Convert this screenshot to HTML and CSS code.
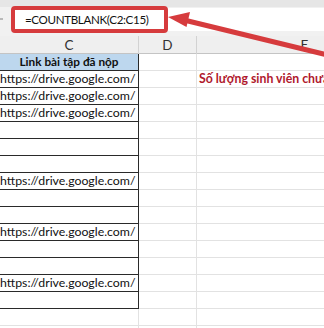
FILE: index.html
```html
<!DOCTYPE html>
<html lang="vi">
<head>
<meta charset="utf-8">
<link rel="stylesheet" href="styles.css">
</head>
<body>
<div class="app">
  <div class="topbar"></div>
  <div class="formula-row">
    <span class="fx-tail"></span>
    <div class="formula-input">=COUNTBLANK(C2:C15)</div>
  </div>
  <div class="col-headers">
    <div class="ch">C</div>
    <div class="ch">D</div>
    <div class="ch">E</div>
  </div>
  <div class="grid">
    <div class="cell c head">Link bài tập đã nộp</div><div class="cell"></div><div class="cell e"></div>
    <div class="cell c">https://drive.google.com/</div><div class="cell"></div><div class="cell e"><span class="note">Số lượng sinh viên chưa nộp bài</span></div>
    <div class="cell c">https://drive.google.com/</div><div class="cell"></div><div class="cell e"></div>
    <div class="cell c">https://drive.google.com/</div><div class="cell"></div><div class="cell e"></div>
    <div class="cell c"></div><div class="cell"></div><div class="cell e"></div>
    <div class="cell c"></div><div class="cell"></div><div class="cell e"></div>
    <div class="cell c"></div><div class="cell"></div><div class="cell e"></div>
    <div class="cell c">https://drive.google.com/</div><div class="cell"></div><div class="cell e"></div>
    <div class="cell c"></div><div class="cell"></div><div class="cell e"></div>
    <div class="cell c"></div><div class="cell"></div><div class="cell e"></div>
    <div class="cell c">https://drive.google.com/</div><div class="cell"></div><div class="cell e"></div>
    <div class="cell c"></div><div class="cell"></div><div class="cell e"></div>
    <div class="cell c"></div><div class="cell"></div><div class="cell e"></div>
    <div class="cell c">https://drive.google.com/</div><div class="cell"></div><div class="cell e"></div>
    <div class="cell c"></div><div class="cell"></div><div class="cell e"></div>
    <div class="cell"></div><div class="cell"></div><div class="cell e"></div>
    <div class="cell"></div><div class="cell"></div><div class="cell e"></div>
  </div>
  <div class="callout-box"></div>
  <svg class="arrow" width="324" height="80" viewBox="0 0 324 80">
    <line x1="186" y1="20.5" x2="340" y2="58" stroke="#d63b3d" stroke-width="5" stroke-linecap="round"/>
    <polygon points="168,17 190,12 186.5,27" fill="#d63b3d"/>
  </svg>
</div>
</body>
</html>
```
FILE: styles.css
```css
html, body {
  margin: 0;
  padding: 0;
  background: #ffffff;
}

.app {
  position: relative;
  width: 324px;
  height: 328px;
  overflow: hidden;
  font-family: Lato, "Noto Sans", sans-serif;
  color: #111;
}

.topbar {
  height: 7px;
  background: #e6e6e6;
}

.formula-row {
  height: 29px;
  display: flex;
  background: #f1f1f1;
  box-sizing: border-box;
  padding: 1px 0 5px 0;
}

.fx-tail {
  width: 11px;
  position: relative;
}

.fx-tail::after {
  content: "";
  position: absolute;
  left: 0;
  top: 10px;
  width: 3px;
  height: 2px;
  background: #b9b9b9;
}

.formula-input {
  flex: 1;
  background: #ffffff;
  font-size: 11.6px;
  letter-spacing: -0.35px;
  line-height: 24px;
  padding-left: 14px;
  color: #111;
}

.col-headers {
  height: 18px;
  display: grid;
  grid-template-columns: 139px 58px 216px;
  background: #efefef;
  box-sizing: border-box;
  border-bottom: 1px solid #c4c4c4;
}

.ch {
  text-align: center;
  font-size: 13.5px;
  line-height: 18px;
  color: #333;
  border-right: 1px solid #d2d2d2;
}

.grid {
  display: grid;
  grid-template-columns: 139px 58px 216px;
  grid-auto-rows: 17px;
}

.cell {
  box-sizing: border-box;
  border-right: 1px solid #e2e2e2;
  border-bottom: 1px solid #e2e2e2;
  font-size: 12.3px;
  line-height: 16px;
  white-space: nowrap;
  overflow: visible;
}

.cell.c {
  border-right: 1px solid #2a2a2a;
  border-bottom: 1px solid #2a2a2a;
  overflow: hidden;
}

.cell.head {
  background: #bdd7ee;
  font-weight: 700;
  font-size: 11.8px;
  text-align: center;
}

.cell.e {
  border-right: none;
}

.note {
  display: block;
  padding-left: 2px;
  font-weight: 700;
  color: #b0192d;
}

.callout-box {
  position: absolute;
  left: 11px;
  top: 6px;
  width: 157px;
  height: 27px;
  box-sizing: border-box;
  border: 4px solid #d63b3d;
  border-radius: 4px;
}

.arrow {
  position: absolute;
  left: 0;
  top: 0;
}
```
